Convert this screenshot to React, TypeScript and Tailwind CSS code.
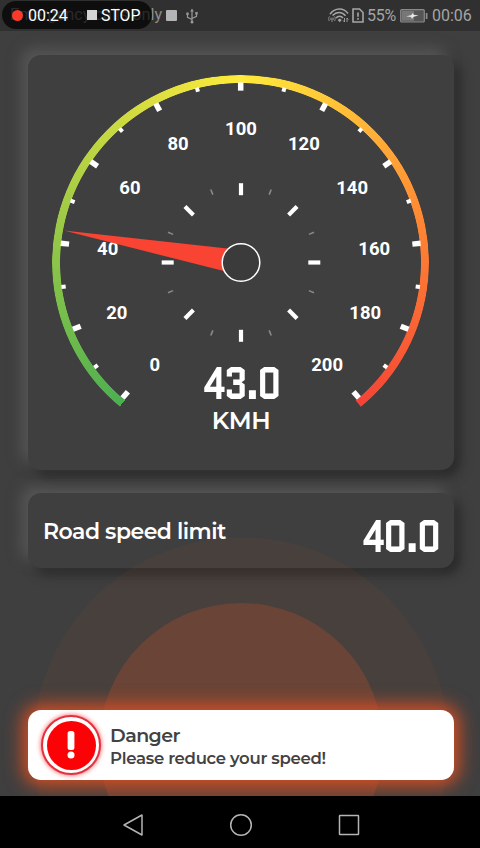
import React from 'react'

const CX = 213
const CY = 207.5
const MAX_SPEED = 200
const SWEEP = 280

const labels = [0, 20, 40, 60, 80, 100, 120, 140, 160, 180, 200]

// speed -> angle in degrees, 0 points straight up
const toAngle = (speed: number) => -SWEEP / 2 + (speed / MAX_SPEED) * SWEEP

// keeps the first and last tick inside the ends of the arc
const tickAngle = (speed: number) => Math.max(-139.2, Math.min(139.2, toAngle(speed)))

const polar = (angle: number, r: number) => {
  const rad = (angle * Math.PI) / 180
  return { x: CX + r * Math.sin(rad), y: CY - r * Math.cos(rad) }
}

const Tick = ({ angle, from, to, width, color = '#fff' }: {
  angle: number, from: number, to: number, width: number, color?: string
}) => {
  const p = polar(angle, from)
  const q = polar(angle, to)
  return <line x1={p.x} y1={p.y} x2={q.x} y2={q.y} stroke={color} strokeWidth={width} />
}

const Gauge = ({ speed }: { speed: number }) => {
  return (
    <div className="relative h-[415px] w-[426px]">
      <div className="absolute left-[24px] top-[20px] h-[375px] w-[377px] rounded-full bg-[conic-gradient(from_-140deg,#4caf50_0deg,#ffeb3b_140deg,#ff8834_216deg,#f44336_280deg,transparent_280.3deg)] [mask:radial-gradient(closest-side,transparent_95.500%,#000_95.900%)]"></div>

      <svg width="426" height="415" viewBox="0 0 426 415" className="relative block">
        <g transform="translate(-.3 1) scale(1 .993)">
          {labels.map((n) => <Tick key={n} angle={tickAngle(n)} from={172.600} to={180.900} width={5.5} />)}
          {labels.slice(1).map((n) => <Tick key={n} angle={toAngle(n - 10)} from={176.700} to={181} width={4} />)}
        </g>

        {[0, 45, 90, 135, 180, 225, 270, 315].map((a) => (
          <g key={a}>
            <Tick angle={a} from={67.3} to={79.3} width={4.2} />
            <Tick angle={a + 22.5} from={73.5} to={79} width={1.6} color="#8a8a8a" />
          </g>
        ))}

        {labels.map((n) => {
          const p = polar(toAngle(n), 134)
          return (
            <text key={n} x={p.x} y={p.y + 6.3} textAnchor="middle" fill="#fff"
              className="font-['Roboto',sans-serif] text-[18.5px] font-bold">{n}</text>
          )
        })}

        <g transform={`rotate(${toAngle(speed)} ${CX} ${CY})`}>
          <path d={`M${CX} ${CY - 180}L${CX + 12.5} ${CY}H${CX - 12.5}Z`} fill="#f94333" />
        </g>
        <circle cx={CX} cy={CY} r="18.8" fill="#3b3b3b" stroke="#fff" strokeWidth="1.5" />
      </svg>
    </div>
  )
}

const cardClassName = "rounded-[13px] bg-[#3f3f3f] shadow-[-7px_-7px_14px_#555555,6px_6px_12px_#292929]"

const digitsClassName = "font-['Quantico','Roboto',sans-serif] text-[46px] font-bold leading-[34px] tracking-[-3px] scale-x-[0.79]"

const StatusBar = () => (
  <header className="relative flex h-[31px] items-center justify-between bg-[#303030] px-2 font-['Roboto',sans-serif] text-base text-[#a5a5a5]">
    <div className="flex items-center pl-[2px]">
      <span className="w-[156px] whitespace-nowrap text-[16.300px] text-[#8d8d8d]">Emergency calls only</span>
      <span className="h-[11px] w-[11px] rounded-[1px] bg-[#b5b5b5]"></span>
      <svg width="14" height="16" viewBox="0 0 14 16" fill="none" stroke="#999" strokeWidth="1.2" className="ml-[8px]">
        <path d="M7 14V2M2.5 6v3.3L7 11.5M11.5 5v3.3L7 10.5" />
        <path d="M5.2 3.5 7 .6l1.8 2.9ZM1.3 4.5h2.4v2.4H1.3ZM10.3 4h2.4v2.4h-2.4Z" fill="#999" stroke="none" />
        <circle cx="7" cy="14" r="1.5" fill="#999" stroke="none" />
      </svg>
    </div>

    <div className="flex items-center">
      <svg width="21" height="16" viewBox="0 0 21 16" fill="none" stroke="#a5a5a5" strokeWidth="1.5">
        <path d="M2 6.2C7-.5 15.500-.5 20 5.500M4.500 7.600c4-4.300 9.500-4.300 13 .2M8 10c2-2.500 5.200-2.500 7 0" />
        <path d="m9.700 12 2-1.500 2 1.500-2 2.300Z" fill="#a5a5a5" stroke="none" />
        <path d="M1.300 13c-1-1.800-.7-3.500.2-4.600M6.500 13c1-1.800.8-3.300 0-4.600M3 12c-.5-1-.3-1.800.1-2.400M5 12c.5-1 .4-1.800 0-2.400M4 10v4" strokeWidth=".8" />
        <path d="M16.500 10v4m-1.300-1.500 1.300 1.500M19 14v-4m1.300 1.500L19 10" strokeWidth=".9" />
      </svg>
      <svg width="12" height="15" viewBox="0 0 12 15" fill="none" stroke="#a5a5a5" strokeWidth="1.6" className="ml-[3px]">
        <path d="M1 1h6.500L11 4.500V14H1ZM6 4.500v4.200M6 10v1.800" />
      </svg>
      <span className="ml-[3px] w-[30px] whitespace-nowrap text-[16px] tracking-[-0.2px]">55%</span>
      <svg width="28" height="14" viewBox="0 0 28 14" className="ml-[3px]">
        <rect x=".7" y=".7" width="23.600" height="12.300" rx="1" fill="#555" stroke="#8a8a8a" strokeWidth="1.200" />
        <rect x="2" y="2" width="12" height="9.700" fill="#777" />
        <path d="m6 7.200 5-1 2-2.200.6 1.800 5 .8-5 1.200-1.700 2.200-.7-2Z" fill="#e8e8e8" />
        <path d="M26.600 4v6" stroke="#8a8a8a" strokeWidth="1.800" />
      </svg>
      <span className="ml-[4px] w-[40px] whitespace-nowrap text-[16px]">00:06</span>
    </div>

    <div className="absolute left-[2px] top-px flex h-[28px] w-[150px] items-center rounded-full bg-black/70 pl-[10px] text-[15.500px] text-white">
      <span className="h-[11px] w-[11px] rounded-full bg-[#fb3a2a]"></span>
      <span className="ml-[5px] w-[59px] pt-px text-[16px]">00:24</span>
      <span className="h-[10px] w-[10px] bg-[#d5d5d5]"></span>
      <span className="ml-[4px] pt-px text-[15.800px]">STOP</span>
    </div>
  </header>
)

const DangerIcon = () => (
  <div className="flex h-[60px] w-[60px] items-center justify-center rounded-full border-[2.500px] border-[#e2323d] bg-white shadow-[0_0_5px_#ff4d55]">
    <div className="flex h-[49px] w-[49px] items-center justify-center rounded-full bg-[#fb0207]">
      <svg width="8" height="28" viewBox="0 0 8 28" fill="#fff">
        <rect x=".6" y="0" width="6.800" height="19" rx="2.500" />
        <circle cx="4" cy="24" r="3.500" />
      </svg>
    </div>
  </div>
)

const App = () => {
  return (
    <div className="h-[848px] w-[480px] overflow-hidden bg-[#3f3f3f] font-['Montserrat','Inter',sans-serif]">
      <StatusBar />

      <main className="relative h-[765px] overflow-hidden px-[28px] pt-[24px] text-white">
        <section className={`relative h-[415px] w-[426px] ${cardClassName}`}>
          <Gauge speed={43} />
          <div className="absolute inset-x-0 top-[311px] flex flex-col items-center">
            <span className={`origin-center ${digitsClassName}`}>43.0</span>
            <span className="mt-[6px] text-[24px] font-semibold leading-[30px] tracking-[-0.5px]">KMH</span>
          </div>
        </section>

        <section className={`mt-[23px] flex h-[75px] w-[426px] items-center justify-between pl-[15px] pr-[15px] ${cardClassName}`}>
          <span className="mt-[2px] text-[22px] font-semibold tracking-[-0.52px]">Road speed limit</span>
          <span className={`mt-[11px] origin-right ${digitsClassName}`}>40.0</span>
        </section>

        {/* pulse behind the warning */}
        <div className="absolute left-[33px] top-[506px] h-[416px] w-[416px] rounded-full bg-[#ff5722]/[0.045]"></div>
        <div className="absolute left-[99px] top-[572px] h-[284px] w-[284px] rounded-full bg-[#ff5722]/[0.19]"></div>

        <section className="relative mt-[142px] flex h-[70px] w-[426px] items-center rounded-[13px] bg-white pl-[13px] text-[#424242] shadow-[0_0_18px_5px_#d94f24]">
          <DangerIcon />
          <div className="ml-[9px] mt-[2px] flex flex-col">
            <span className="text-[19px] font-semibold leading-[23px] tracking-[-0.55px]">Danger</span>
            <span className="text-[16.500px] font-semibold leading-[22px] tracking-[-0.280px]">Please reduce your speed!</span>
          </div>
        </section>
      </main>

      <nav className="flex h-[52px] items-center justify-center gap-[85px] bg-black pl-[2px] pt-[5px]">
        <svg width="22" height="24" viewBox="0 0 22 24" fill="none" stroke="#b4b4b4" strokeWidth="1.500" strokeLinejoin="round">
          <path d="M20 2v20L2 12Z" />
        </svg>
        <svg width="24" height="24" viewBox="0 0 24 24" fill="none" stroke="#b4b4b4" strokeWidth="1.500">
          <circle cx="12" cy="12" r="10.300" />
        </svg>
        <svg width="22" height="24" viewBox="0 0 22 24" fill="none" stroke="#b4b4b4" strokeWidth="1.500">
          <rect x="1.500" y="2.500" width="19" height="19" rx=".5" />
        </svg>
      </nav>
    </div>
  )
}

export default App
